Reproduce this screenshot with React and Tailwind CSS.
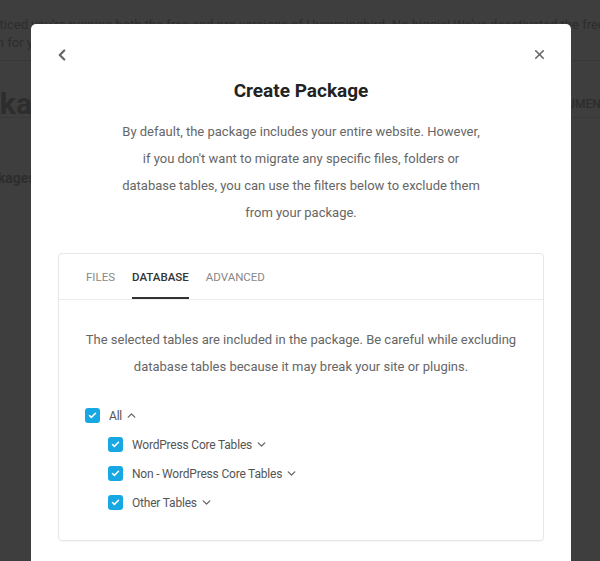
import { ChevronLeft, ChevronDown, ChevronUp, X, Check } from "lucide-react"

function Box() {
  return (
    <span className="flex h-[15px] w-[15px] shrink-0 items-center justify-center rounded-[3px] bg-[#17a8e3]">
      <Check className="h-[9px] w-[9px] text-white" strokeWidth={4} />
    </span>
  )
}

function Row({ label, open, child }) {
  const Icon = open ? ChevronUp : ChevronDown
  return (
    <div className={`flex h-[29px] items-center ${child ? "pl-[23px]" : ""}`}>
      <Box />
      <span className="ml-[9px] text-[12px] tracking-[-0.2px] text-[#555]">{label}</span>
      <Icon className="ml-[3px] h-[13px] w-[13px] text-[#666]" strokeWidth={2.5} />
    </div>
  )
}

export default function App() {
  return (
    <div className="relative h-[561px] w-[600px] overflow-hidden bg-[#3e3e3e] font-['Roboto',sans-serif]">
      {/* page behind the overlay */}
      <div className="text-[#2d2d2d]">
        <div className="border-b border-[#383838] pb-[8px] pt-[16px]">
          <p className="-ml-[15px] whitespace-nowrap text-[13px] leading-[18px]">
            noticed you're running both the free and pro versions of Hummingbird. No biggie! We've deactivated the free
          </p>
          <p className="-ml-[38px] whitespace-nowrap text-[13px] leading-[18px]">
            version for you.
          </p>
        </div>
        <div className="flex items-center justify-between border-b border-[#383838] pt-[30px]">
          <span className="-ml-[51px] text-[30px] font-bold leading-[26px]">Packages</span>
          <span className="-mr-[42px] text-[12px] font-medium">DOCUMENTATION</span>
        </div>
        <p className="-ml-[26px] mt-[50px] text-[14px] font-bold">Packages</p>
      </div>

      {/* modal */}
      <div className="absolute inset-0 flex justify-center pl-[2px] pt-[24px]">
        <div className="h-[600px] w-[540px] rounded-[5px] bg-white px-[27px] pt-[20px]">
          <div className="flex h-[21px] items-center justify-between">
            <ChevronLeft className="-ml-[5px] h-[18px] w-[18px] text-[#666]" strokeWidth={3} />
            <X className="-mr-[3px] h-[15px] w-[15px] text-[#666]" strokeWidth={2.5} />
          </div>
          <h2 className="mt-[12px] text-center text-[19px] font-bold leading-[28px] text-[#222]">Create Package</h2>
          <p className="mt-[13px] text-center text-[13px] leading-[27px] text-[#666]">
            By default, the package includes your entire website. However,
            <br />
            if you don't want to migrate any specific files, folders or
            <br />
            database tables, you can use the filters below to exclude them
            <br />
            from your package.
          </p>

          <div className="mt-[27px] rounded-[4px] border border-[#e6e6e6] shadow-[0_1px_1px_rgba(0,0,0,0.04)]">
            <div className="flex gap-[17px] border-b border-[#ececec] px-[27px] text-[11.5px]">
              <span className="pb-[13px] pt-[15px] text-[#888]">FILES</span>
              <span className="border-b-2 border-[#333] pb-[11px] pt-[15px] font-medium text-[#333]">DATABASE</span>
              <span className="pb-[13px] pt-[15px] text-[#888]">ADVANCED</span>
            </div>
            <div className="px-[20px] pb-[23px] pt-[26px]">
              <p className="text-center text-[13px] leading-[27px] text-[#666]">
                The selected tables are included in the package. Be careful while excluding
                <br />
                database tables because it may break your site or plugins.
              </p>
              <div className="mt-[21px] pl-[6px]">
                <Row label="All" open />
                <Row label="WordPress Core Tables" child />
                <Row label="Non - WordPress Core Tables" child />
                <Row label="Other Tables" child />
              </div>
            </div>
          </div>
        </div>
      </div>
    </div>
  )
}
